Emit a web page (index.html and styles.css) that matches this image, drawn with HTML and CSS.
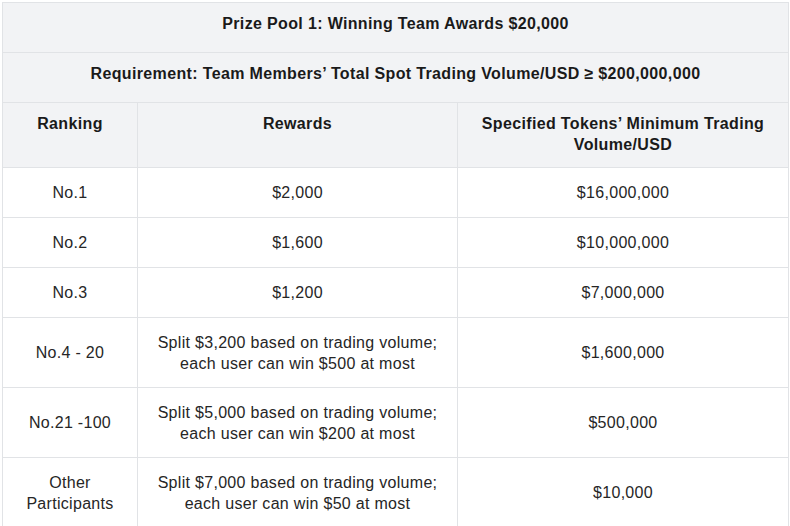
FILE: index.html
```html
<!DOCTYPE html>
<html lang="en">
<head>
<meta charset="utf-8">
<title>Prize Pool 1</title>
<link rel="stylesheet" href="styles.css">
</head>
<body>
<table class="prize">
  <colgroup>
    <col class="c-rank">
    <col class="c-reward">
    <col class="c-min">
  </colgroup>
  <thead>
    <tr class="r-title">
      <th colspan="3">Prize Pool 1: Winning Team Awards $20,000</th>
    </tr>
    <tr class="r-title">
      <th colspan="3">Requirement: Team Members’ Total Spot Trading Volume/USD ≥ $200,000,000</th>
    </tr>
    <tr class="r-head">
      <th>Ranking</th>
      <th>Rewards</th>
      <th>Specified Tokens’ Minimum Trading Volume/USD</th>
    </tr>
  </thead>
  <tbody>
    <tr class="r-one">
      <td>No.1</td>
      <td>$2,000</td>
      <td>$16,000,000</td>
    </tr>
    <tr class="r-one">
      <td>No.2</td>
      <td>$1,600</td>
      <td>$10,000,000</td>
    </tr>
    <tr class="r-one">
      <td>No.3</td>
      <td>$1,200</td>
      <td>$7,000,000</td>
    </tr>
    <tr class="r-two">
      <td>No.4 - 20</td>
      <td>Split $3,200 based on trading volume;<br>each user can win $500 at most</td>
      <td>$1,600,000</td>
    </tr>
    <tr class="r-two">
      <td>No.21 -100</td>
      <td>Split $5,000 based on trading volume;<br>each user can win $200 at most</td>
      <td>$500,000</td>
    </tr>
    <tr class="r-two">
      <td>Other<br>Participants</td>
      <td>Split $7,000 based on trading volume;<br>each user can win $50 at most</td>
      <td>$10,000</td>
    </tr>
  </tbody>
</table>
</body>
</html>
```

FILE: styles.css
```css
html, body {
  margin: 0;
  padding: 0;
  background: #ffffff;
}

body {
  padding: 2px 0 0 2px;
  font-family: "Liberation Sans", Arial, sans-serif;
  font-size: 16px;
  line-height: 21px;
  letter-spacing: 0.3px;
  color: #222222;
}

.prize {
  border-collapse: collapse;
  table-layout: fixed;
  width: 786px;
}

.c-rank { width: 135px; }
.c-reward { width: 320px; }
.c-min { width: 331px; }

.prize th,
.prize td {
  border: 1px solid #e1e3e6;
  text-align: center;
  padding: 0 8px;
}

.prize th {
  background: #f2f3f5;
  font-weight: bold;
  color: #1a1a1a;
  vertical-align: top;
  padding-top: 10px;
  letter-spacing: 0.35px;
}

.prize td {
  vertical-align: middle;
  color: #262626;
}

.r-title { height: 50px; }
.r-head { height: 65px; }
.r-one { height: 50px; }
.r-two { height: 70px; }
```
